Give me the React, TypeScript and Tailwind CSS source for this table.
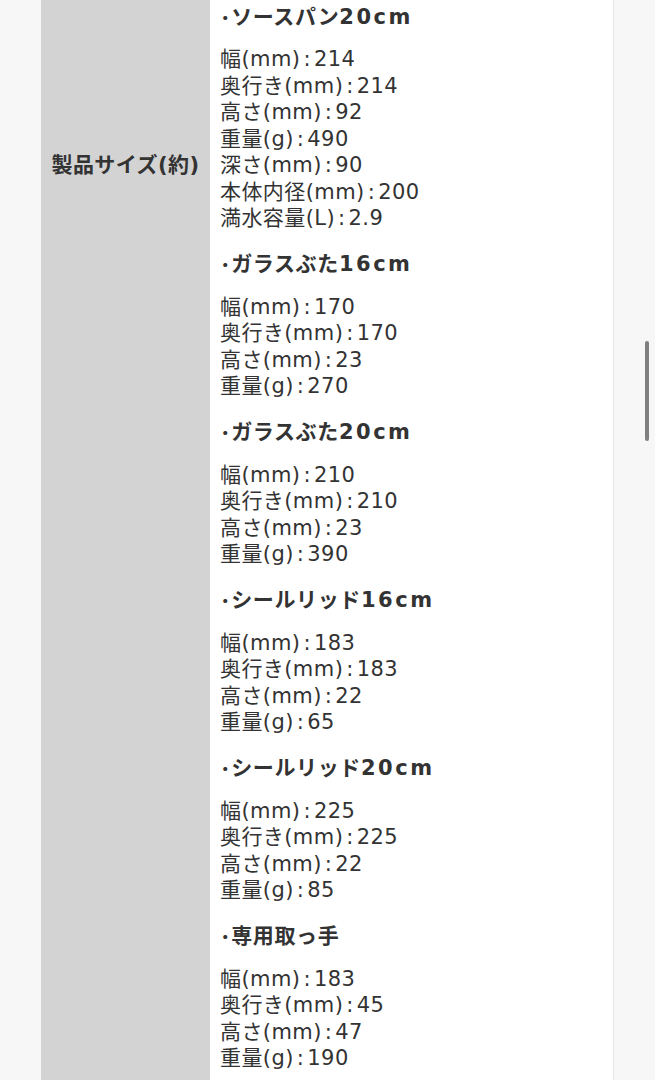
const sections = [
  {
    title: "ソースパン",
    size: "20cm",
    rows: [
      ["幅(mm)", "214"],
      ["奥行き(mm)", "214"],
      ["高さ(mm)", "92"],
      ["重量(g)", "490"],
      ["深さ(mm)", "90"],
      ["本体内径(mm)", "200"],
      ["満水容量(L)", "2.9"],
    ],
  },
  {
    title: "ガラスぶた",
    size: "16cm",
    rows: [["幅(mm)", "170"], ["奥行き(mm)", "170"], ["高さ(mm)", "23"], ["重量(g)", "270"]],
  },
  {
    title: "ガラスぶた",
    size: "20cm",
    rows: [["幅(mm)", "210"], ["奥行き(mm)", "210"], ["高さ(mm)", "23"], ["重量(g)", "390"]],
  },
  {
    title: "シールリッド",
    size: "16cm",
    rows: [["幅(mm)", "183"], ["奥行き(mm)", "183"], ["高さ(mm)", "22"], ["重量(g)", "65"]],
  },
  {
    title: "シールリッド",
    size: "20cm",
    rows: [["幅(mm)", "225"], ["奥行き(mm)", "225"], ["高さ(mm)", "22"], ["重量(g)", "85"]],
  },
  {
    title: "専用取っ手",
    size: "",
    rows: [["幅(mm)", "183"], ["奥行き(mm)", "45"], ["高さ(mm)", "47"], ["重量(g)", "190"]],
  },
];

export default function App() {
  return (
    <div
      className="relative h-[1080px] overflow-hidden bg-[#f7f7f7] text-[#333]"
      style={{ fontFamily: '"DejaVu Sans", "Noto Sans CJK JP", sans-serif' }}
    >
      <div className="ml-[41px] flex w-[573px] border-r border-[#e6e6e6] bg-white">
        {/* LABEL */}
        <div className="w-[169px] shrink-0 bg-[#d3d3d3] pt-[151px] text-center">
          <p className="text-[21px] font-bold leading-[28px] tracking-[0.02em]">
            製品サイズ(約)
          </p>
        </div>

        {/* VALUES */}
        <div className="flex-1 pl-[10px] pt-[4px]">
          {sections.map((s, idx) => (
            <div key={idx} className="mb-[19.6px]">
              <h3 className="mb-[16px] flex h-[26.5px] items-center whitespace-nowrap text-[21px] font-bold tracking-[0.03em]">
                <span style={{ fontFamily: '"Noto Sans CJK JP", sans-serif' }}>･</span>
                <span>{s.title}</span>
                {s.size && <span className="tracking-[0.12em]">{s.size}</span>}
              </h3>
              <ul>
                {s.rows.map(([k, v]) => (
                  <li
                    key={k}
                    className="flex h-[26.5px] items-center whitespace-nowrap text-[21px] tracking-[0.02em]"
                  >
                    <span>{k}</span>
                    <span className="mx-[3px]">:</span>
                    <span>{v}</span>
                  </li>
                ))}
              </ul>
            </div>
          ))}
        </div>
      </div>

      {/* SCROLLBAR */}
      <div className="absolute left-[645px] top-[341px] h-[100px] w-[4px] rounded-full bg-[#808080]" />
    </div>
  );
}
